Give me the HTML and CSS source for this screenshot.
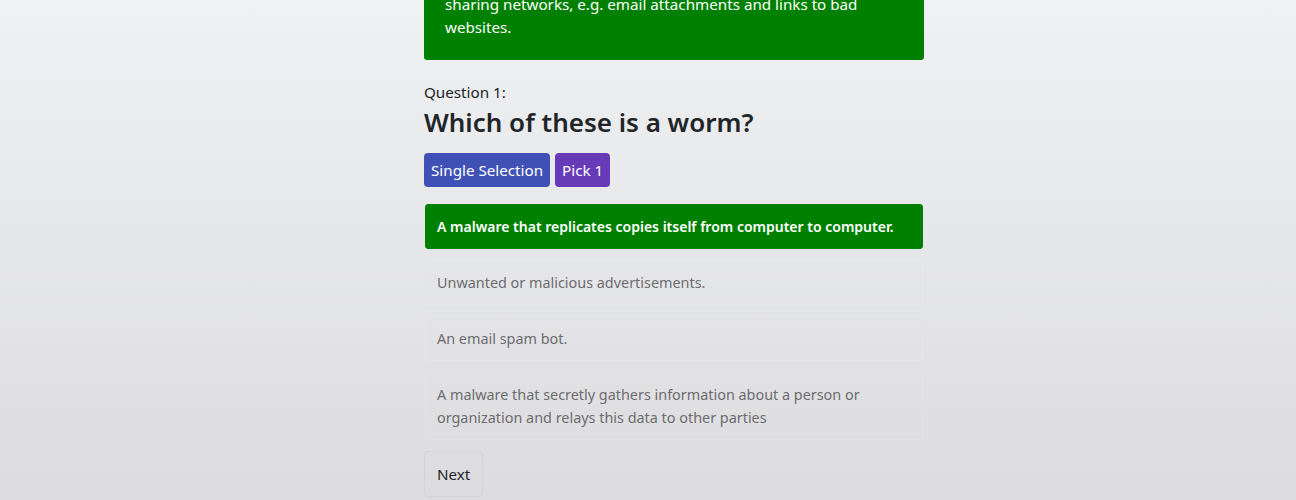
FILE: index.html
```html
<!DOCTYPE html>
<html lang="en">
<head>
<meta charset="utf-8">
<title>Quiz</title>
<link rel="stylesheet" href="styles.css">
</head>
<body>
<main class="quiz">
  <div class="info">sharing networks, e.g. email attachments and links to bad websites.</div>
  <div class="q-label">Question 1:</div>
  <h3 class="q-title">Which of these is a worm?</h3>
  <div class="badges">
    <span class="badge badge-indigo">Single Selection</span>
    <span class="badge badge-purple">Pick 1</span>
  </div>
  <ul class="options">
    <li class="option option-correct">A malware that replicates copies itself from computer to computer.</li>
    <li class="option">Unwanted or malicious advertisements.</li>
    <li class="option">An email spam bot.</li>
    <li class="option">A malware that secretly gathers information about a person or organization and relays this data to other parties</li>
  </ul>
  <button class="next-btn" type="button">Next</button>
</main>
</body>
</html>
```

FILE: styles.css
```css
html, body {
  margin: 0;
  padding: 0;
}
body {
  min-height: 500px;
  background: linear-gradient(180deg, #f0f1f3 0%, #dcdcde 100%);
  font-family: "Noto Sans", "Open Sans", sans-serif;
  color: #212529;
  font-size: 16px;
  line-height: 24px;
  overflow: hidden;
}
.quiz {
  width: 500px;
  margin-left: 424px;
  display: flex;
  flex-direction: column;
  align-items: flex-start;
}
.info {
  align-self: stretch;
  margin-top: -27px;
  padding: 20px 20px 21px 21px;
  background: #008000;
  color: #ffffff;
  border-radius: 0 0 3px 3px;
  font-size: 15.2px;
  line-height: 23px;
}
.q-label {
  margin-top: 20px;
  font-size: 15.2px;
  line-height: 24px;
}
.q-title {
  margin: 1px 0 0 0;
  font-size: 26px;
  line-height: 34px;
  font-weight: 600;
}
.badges {
  display: flex;
  gap: 5px;
  margin-top: 14px;
}
.badge {
  color: #fff;
  font-size: 15.2px;
  line-height: 22px;
  padding: 6px 7px;
  border-radius: 4px;
}
.badge-indigo { background: #3f51b5; }
.badge-purple { background: #673ab7; }
.options {
  list-style: none;
  margin: 17px 0 0 0;
  padding: 0 1px;
  align-self: stretch;
  display: flex;
  flex-direction: column;
  gap: 11px;
}
.option {
  padding: 10px 11px;
  line-height: 23px;
  font-size: 14.4px;
  color: #6c6c70;
  border: 1px solid rgba(255, 255, 255, 0.12);
  border-radius: 3px;
}
.option-correct {
  background: #008000;
  border-color: #008000;
  color: #ffffff;
  font-weight: 600;
  font-size: 14px;
}
.next-btn {
  margin-top: 11px;
  font-family: inherit;
  font-size: 15.2px;
  color: #212529;
  background: transparent;
  border: 1px solid #d4d4d7;
  border-radius: 4px;
  padding: 11px 12px;
  line-height: 22px;
}
```
